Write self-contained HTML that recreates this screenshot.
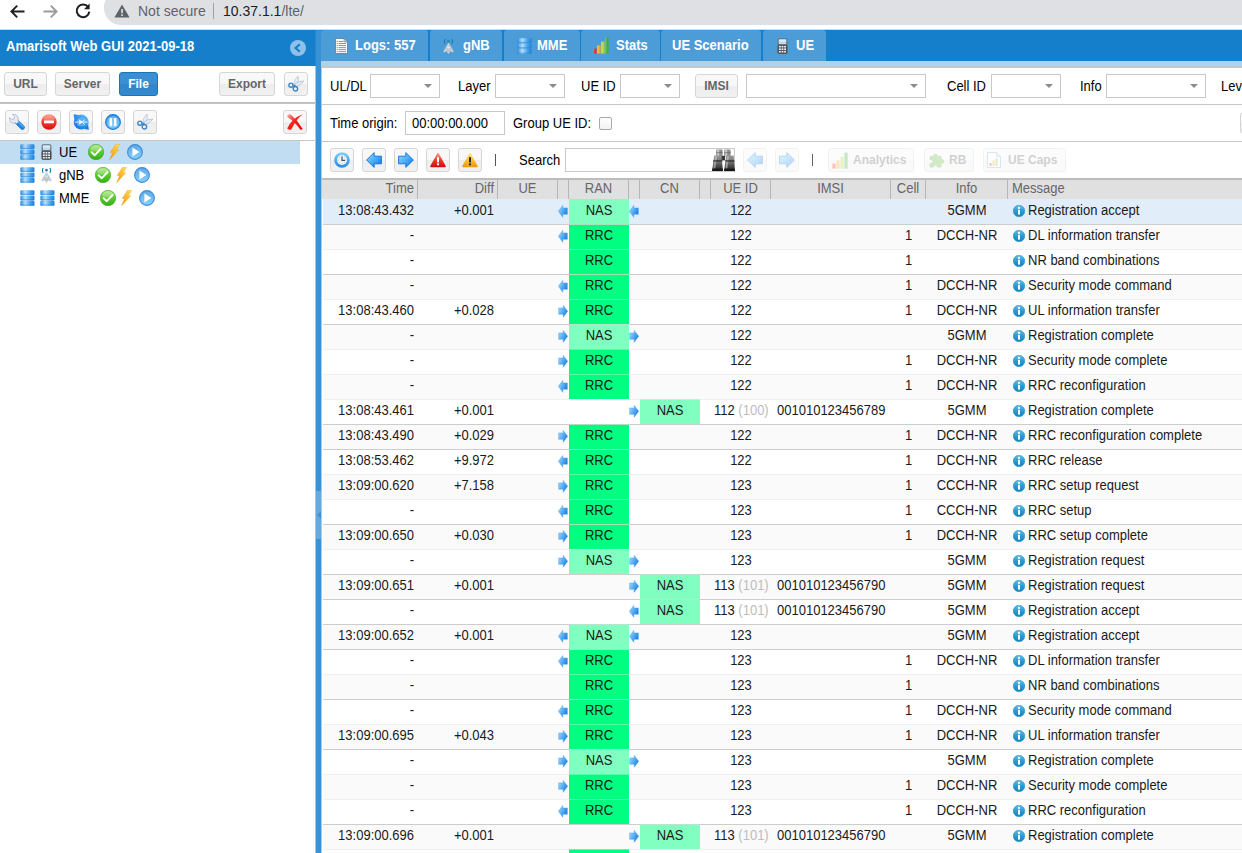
<!DOCTYPE html>
<html><head><meta charset="utf-8"><title>Amarisoft Web GUI</title><style>
*{box-sizing:border-box;margin:0;padding:0}
html,body{width:1242px;height:853px;overflow:hidden;background:#fff}
body{font-family:"Liberation Sans",sans-serif;font-size:13px;color:#000;position:relative}
.a{position:absolute}
.t{position:absolute;white-space:nowrap;line-height:16px;transform:scaleY(1.1);transform-origin:0 78%}
.nt{transform:none}
.x{display:inline-block;line-height:16px;transform:scaleY(1.1);transform-origin:50% 78%}
svg{display:block}
.ic{position:absolute}
/* browser chrome */
#pill{left:104px;top:-10px;width:1200px;height:35px;border-radius:17px;background:#dfe0e3}
/* panels */
#lh{left:0;top:30px;width:316px;height:36px;background:#157fcc}
#split{left:315px;top:30px;width:7px;height:823px;background:linear-gradient(to right,rgba(56,146,212,.5) 1px,#3892d4 1px,#3892d4 6px,rgba(56,146,212,.45) 6px)}
#tabbar{left:321px;top:30px;width:921px;height:31px;background:#157fcc}
#strip{left:321px;top:61px;width:921px;height:5px;background:#add2ed}
.tab{position:absolute;top:0;height:31px;background:#4b9cd7;border-radius:3px 3px 0 0;color:#fff;font-weight:bold;font-size:13px}
.tab .t{top:8px}
.hl{position:absolute;background:#c6c6c6}
/* buttons */
.btn{position:absolute;height:24px;border:1px solid #d6d6d6;border-radius:3px;background:linear-gradient(#f8f8f8,#f8f8f8 50%,#ededed 50%,#f1f1f1);color:#666;font-weight:bold;font-size:12px;text-align:center;line-height:22px}
.btn.p{background:linear-gradient(#3a8fd3,#3a8fd3 50%,#3085cb 50%,#3589ce);border-color:#1a73bd;color:#fff}
.btn .ic{left:3px;top:3px}
.btn.dis{opacity:.3}
.fld{position:absolute;height:24px;border:1px solid #c8c8c8;background:#fff}
.fld i{position:absolute;right:7px;top:9px;width:0;height:0;border:4px solid transparent;border-top:4px solid #8c8c8c;border-bottom:0}
/* tree */
.trow{position:absolute;left:0;width:300px;height:23px}
/* grid */
#ghead{left:322px;top:180px;width:920px;height:19px;background:#e0e0e0}
.hc{position:absolute;top:0;height:19px;color:#666;line-height:17px;border-right:1px solid #b6b6b6}
.row{position:absolute;left:323px;width:919px;height:25px;background:#fff}
.row.alt{background:#fafafa}
.row.sel{background:#e1edf8}
.row .c{position:absolute;top:0;height:25px;line-height:24px;white-space:nowrap;color:#1a1a1a}
.row .ln{position:absolute;left:0;top:0;width:920px;height:1px}
.ran{background:#00ff80;text-align:center}
.nas{background:#80ffc0;text-align:center}
.g{color:#bdbdbd}
</style></head><body>
<svg width="0" height="0" style="position:absolute"><defs>
<linearGradient id="gBlue" x1="0" y1="0" x2="1" y2="1"><stop offset="0" stop-color="#8ed3fc"/><stop offset=".55" stop-color="#3ea3f2"/><stop offset="1" stop-color="#1173e0"/></linearGradient>
<linearGradient id="gBlueV" x1="0" y1="0" x2="0" y2="1"><stop offset="0" stop-color="#7ccbfb"/><stop offset="1" stop-color="#1c7fe3"/></linearGradient>
<linearGradient id="gBlueH" x1="0" y1="0" x2="1" y2="0"><stop offset="0" stop-color="#2b8de2"/><stop offset=".35" stop-color="#b4e0fb"/><stop offset=".7" stop-color="#4aa6ec"/><stop offset="1" stop-color="#1f7fd8"/></linearGradient>
<linearGradient id="gGreen" x1="0" y1="0" x2="0" y2="1"><stop offset="0" stop-color="#b2e98a"/><stop offset=".5" stop-color="#58cc2a"/><stop offset="1" stop-color="#34b012"/></linearGradient>
<linearGradient id="gRed" x1="0" y1="0" x2="0" y2="1"><stop offset="0" stop-color="#fa9a88"/><stop offset=".5" stop-color="#f03a2e"/><stop offset="1" stop-color="#d80e0e"/></linearGradient>
<linearGradient id="gRedX" x1="0" y1="0" x2="1" y2="1"><stop offset="0" stop-color="#fbb0a8"/><stop offset=".45" stop-color="#f6231d"/><stop offset="1" stop-color="#e00808"/></linearGradient>
<linearGradient id="gYel" x1="0" y1="0" x2="0" y2="1"><stop offset="0" stop-color="#ffe680"/><stop offset=".55" stop-color="#fbc02a"/><stop offset="1" stop-color="#ee9a10"/></linearGradient>
<linearGradient id="gBolt" x1="1" y1="0" x2="0" y2="1"><stop offset="0" stop-color="#ffe45c"/><stop offset=".5" stop-color="#fdb92a"/><stop offset="1" stop-color="#f08a12"/></linearGradient>
<linearGradient id="gGray" x1="0" y1="0" x2="0" y2="1"><stop offset="0" stop-color="#9a9a9a"/><stop offset=".45" stop-color="#6a6a6a"/><stop offset="1" stop-color="#1e1e1e"/></linearGradient>
<linearGradient id="gCirc" x1="0" y1="0" x2="0" y2="1"><stop offset="0" stop-color="#62a8e6"/><stop offset=".5" stop-color="#6fbcf0"/><stop offset="1" stop-color="#86d4fb"/></linearGradient>
<linearGradient id="gPause" x1="0" y1="0" x2="0" y2="1"><stop offset="0" stop-color="#3a93e4"/><stop offset="1" stop-color="#6cc6f8"/></linearGradient>
<linearGradient id="gHandle" x1="0" y1="0" x2="1" y2="1"><stop offset="0" stop-color="#1c6fd0"/><stop offset="1" stop-color="#4fb8f2"/></linearGradient>
<linearGradient id="gArr" x1="0" y1="0" x2="1" y2=".6"><stop offset="0" stop-color="#b4defb"/><stop offset=".5" stop-color="#5cb2f4"/><stop offset="1" stop-color="#1c7fe6"/></linearGradient>
<linearGradient id="gArrB" x1="0" y1="0" x2="1" y2="1"><stop offset="0" stop-color="#9adcfe"/><stop offset=".45" stop-color="#4fb4f8"/><stop offset="1" stop-color="#0f6fe0"/></linearGradient>
<linearGradient id="gClk" x1="0" y1="0" x2="0" y2="1"><stop offset="0" stop-color="#8ad4fc"/><stop offset=".5" stop-color="#4aaaf2"/><stop offset="1" stop-color="#2a8ae4"/></linearGradient>
<linearGradient id="gRef" x1="0" y1="1" x2="1" y2="0"><stop offset="0" stop-color="#0f70dc"/><stop offset=".5" stop-color="#2f94ec"/><stop offset="1" stop-color="#6ec8fb"/></linearGradient>
<linearGradient id="gInfo" x1="0" y1="0" x2="0" y2="1"><stop offset="0" stop-color="#62bde6"/><stop offset=".5" stop-color="#2a9ad2"/><stop offset="1" stop-color="#1484c0"/></linearGradient>
</defs></svg>
<div class="a" id="pill"></div>
<svg class="ic" style="left:9px;top:3px" width="17" height="17" viewBox="0 0 17 17"><path d="M15.5 8.5H3M8.2 2.6L2.4 8.5l5.8 5.9" fill="none" stroke="#1f1f1f" stroke-width="1.9"/></svg>
<svg class="ic" style="left:42px;top:3px" width="17" height="17" viewBox="0 0 17 17"><path d="M1.5 8.5H14M8.8 2.6l5.8 5.9-5.8 5.9" fill="none" stroke="#9a9a9a" stroke-width="1.9"/></svg>
<svg class="ic" style="left:74px;top:2px" width="18" height="18" viewBox="0 0 18 18"><path d="M14.2 5.2A6.3 6.3 0 1 0 15.3 9.6" fill="none" stroke="#1f1f1f" stroke-width="2"/><path d="M15.6 1.6v5.6H10z" fill="#1f1f1f"/></svg>
<svg class="ic" style="left:114px;top:4px" width="16" height="14" viewBox="0 0 16 14"><path d="M8 0.5L15.6 13.5H0.4z" fill="#5f6368"/><rect x="7.2" y="5" width="1.7" height="4.2" fill="#dfe0e3"/><rect x="7.2" y="10.3" width="1.7" height="1.7" fill="#dfe0e3"/></svg>
<div class="t nt" style="left:138px;top:3px;font-size:14px;color:#5f6368">Not secure</div>
<div class="a" style="left:213px;top:3px;width:1px;height:16px;background:#9aa0a6"></div>
<div class="t nt" style="left:223px;top:3px;font-size:14px;color:#202124">10.37.1.1<span style="color:#5f6368">/lte/</span></div>
<div class="a" style="left:0;top:29px;width:1242px;height:1px;background:#d6d6d6"></div>
<div class="a" id="lh"></div>
<div class="t" style="left:6px;top:39px;color:#fff;font-weight:bold;font-size:13px">Amarisoft Web GUI 2021-09-18</div>
<svg class="ic" style="left:290px;top:40px" width="16" height="16" viewBox="0 0 16 16"><circle cx="8" cy="8" r="8" fill="#8fc1e8"/><path d="M9.8 4.2L5.6 8l4.2 3.8" fill="none" stroke="#157fcc" stroke-width="2.2"/></svg>
<div class="a" id="split"></div>
<div class="a" style="left:316px;top:491px;width:5px;height:48px;background:#67a9dd"></div>
<svg class="ic" style="left:317px;top:511px" width="4" height="8" viewBox="0 0 4 8"><path d="M4 0L0 4l4 4z" fill="#3f93d6"/></svg>
<div class="btn " style="left:4px;top:72px;width:43px"><span class="x">URL</span></div>
<div class="btn " style="left:55px;top:72px;width:55px"><span class="x">Server</span></div>
<div class="btn p" style="left:119px;top:72px;width:39px"><span class="x">File</span></div>
<div class="btn " style="left:219px;top:72px;width:56px"><span class="x">Export</span></div>
<div class="btn " style="left:284px;top:72px;width:24px"><span class="ic"><svg width="16" height="16" viewBox="0 0 16 16" ><path d="M5.4 8.6 Q6.8 3 10 0.1 Q11.8 4 7.8 9.8 Z" fill="#e9eff6" stroke="#a3b3c4" stroke-width=".6"/><path d="M6.6 8.2 Q11 4.4 15.9 5.1 Q13 9.6 7.6 10.8 Z" fill="#e2eaf2" stroke="#a3b3c4" stroke-width=".6"/><circle cx="2.9" cy="9.2" r="2.05" fill="none" stroke="#3f84c9" stroke-width="1.35"/><circle cx="7.4" cy="12.7" r="2.25" fill="none" stroke="#3f84c9" stroke-width="1.35"/><path d="M4.8 10 L6.8 9.4 L7.2 10.6" fill="none" stroke="#3f84c9" stroke-width="1.3"/></svg></span></div>
<div class="hl" style="left:0;top:102px;width:316px;height:2px;background:linear-gradient(#bababa,#c9c9c9)"></div>
<div class="btn " style="left:5px;top:110px;width:24px"><span class="ic"><svg width="16" height="16" viewBox="0 0 16 16" ><path d="M8.4 8.4 L13.4 13.4" stroke="#1f7ddc" stroke-width="4.8" stroke-linecap="round"/><path d="M9.4 8.2 L14 12.8" stroke="#58b8f4" stroke-width="1.6" stroke-linecap="round" opacity=".8"/><path d="M3.6 0.6 A4.4 4.4 0 0 1 9 6.4 L9.8 7.4 L7.6 9.6 L6.4 8.8 A4.4 4.4 0 0 1 0.4 3.6 L3 5.6 L5 5 L5.6 3 Z" fill="#e6e9f2" stroke="#a9aecb" stroke-width=".7"/></svg></span></div>
<div class="btn " style="left:37px;top:110px;width:24px"><span class="ic"><svg width="16" height="16" viewBox="0 0 16 16" ><circle cx="8" cy="8" r="7.7" fill="url(#gRed)"/><ellipse cx="8" cy="4.4" rx="5.4" ry="3" fill="#fff" opacity=".2"/><rect x="3" y="6.5" width="10" height="2.8" fill="#fff"/></svg></span></div>
<div class="btn " style="left:69px;top:110px;width:24px"><span class="ic"><svg width="16" height="16" viewBox="0 0 16 16" ><circle cx="8.2" cy="8" r="7.5" fill="url(#gRef)"/><path d="M0.6 0.2 L1.3 5.2 L5.4 1.1 Z" fill="#2b8fea"/><path d="M15.9 15.8 L15.1 10.8 L11 14.9 Z" fill="#1a7ce2"/><circle cx="8.2" cy="8" r="4.6" fill="#7cc8fa" opacity=".5"/><path d="M1.6 7.7 L6.6 7.5 L5.2 5.2 L9.6 7.5 L14.8 7.7 L14.8 8.5 L9.6 8.6 L5.2 11 L6.6 8.6 L1.6 8.5 Z" fill="#fff" opacity=".92"/><path d="M11.6 5.6 L9.8 7.4 M11.6 10.6 L9.8 8.8" stroke="#fff" stroke-width="1" opacity=".85"/></svg></span></div>
<div class="btn " style="left:101px;top:110px;width:24px"><span class="ic"><svg width="16" height="16" viewBox="0 0 16 16" ><circle cx="8" cy="8" r="7.4" fill="url(#gPause)" stroke="#1f7bd8" stroke-width="1.1"/><circle cx="8" cy="8" r="5.8" fill="#8fd4fb" opacity=".45"/><rect x="4.5" y="4" width="2.7" height="8.2" fill="#fff" opacity=".95"/><rect x="8.8" y="4" width="2.7" height="8.2" fill="#fff" opacity=".95"/></svg></span></div>
<div class="btn " style="left:133px;top:110px;width:24px"><span class="ic"><svg width="16" height="16" viewBox="0 0 16 16" ><path d="M5.4 8.6 Q6.8 3 10 0.1 Q11.8 4 7.8 9.8 Z" fill="#e9eff6" stroke="#a3b3c4" stroke-width=".6"/><path d="M6.6 8.2 Q11 4.4 15.9 5.1 Q13 9.6 7.6 10.8 Z" fill="#e2eaf2" stroke="#a3b3c4" stroke-width=".6"/><circle cx="2.9" cy="9.2" r="2.05" fill="none" stroke="#3f84c9" stroke-width="1.35"/><circle cx="7.4" cy="12.7" r="2.25" fill="none" stroke="#3f84c9" stroke-width="1.35"/><path d="M4.8 10 L6.8 9.4 L7.2 10.6" fill="none" stroke="#3f84c9" stroke-width="1.3"/></svg></span></div>
<div class="btn " style="left:283px;top:110px;width:24px"><span class="ic"><svg width="16" height="16" viewBox="0 0 16 16" ><path d="M16 0.3 Q9.6 4.6 4.4 15.2 Q2.4 16.6 0.2 14.6 Q4.6 4.2 16 0.3Z" fill="url(#gRedX)"/><path d="M0.1 2.8 Q0.3 0 3.6 0.3 Q10.2 6 15.5 14.8 Q15.2 16.3 13.2 15.6 Q8 8 0.1 2.8Z" fill="url(#gRedX)"/></svg></span></div>
<div class="hl" style="left:0;top:140px;width:316px;height:1px"></div>
<div class="trow" style="top:141px;background:#c1ddf1"><span class="ic" style="left:20px;top:3px"><svg width="15" height="16" viewBox="0 0 15 16" ><rect x="0.3" y="0.2" width="14.2" height="4.9" rx="1.3" fill="url(#gBlueH)"/><rect x="0.3" y="3.8000000000000003" width="14.2" height="1.3" rx=".6" fill="#1f7fd8" opacity=".45"/><rect x="0.3" y="5.5" width="14.2" height="4.9" rx="1.3" fill="url(#gBlueH)"/><rect x="0.3" y="9.1" width="14.2" height="1.3" rx=".6" fill="#1f7fd8" opacity=".45"/><rect x="0.3" y="10.8" width="14.2" height="4.9" rx="1.3" fill="url(#gBlueH)"/><rect x="0.3" y="14.4" width="14.2" height="1.3" rx=".6" fill="#1f7fd8" opacity=".45"/></svg></span><span class="ic" style="left:41px;top:3px"><svg width="11" height="16" viewBox="0 0 11 16" ><rect x="0.6" y="0.3" width="9.8" height="15.4" rx="1.6" fill="#6b7077"/><rect x="0.6" y="7" width="9.8" height="8.7" rx="1.4" fill="#4a4e54"/><rect x="1.8" y="1.4" width="7.4" height="4.6" rx=".5" fill="#b9dcf5"/><rect x="1.8" y="1.4" width="7.4" height="2" rx=".5" fill="#d9eefb"/><rect x="1.9" y="7.9" width="1.9" height="1.6" fill="#eceff1"/><rect x="4.5" y="7.9" width="1.9" height="1.6" fill="#eceff1"/><rect x="7.1" y="7.9" width="1.9" height="1.6" fill="#eceff1"/><rect x="1.9" y="10.4" width="1.9" height="1.6" fill="#eceff1"/><rect x="4.5" y="10.4" width="1.9" height="1.6" fill="#eceff1"/><rect x="7.1" y="10.4" width="1.9" height="1.6" fill="#eceff1"/><rect x="1.9" y="12.9" width="1.9" height="1.6" fill="#eceff1"/><rect x="4.5" y="12.9" width="1.9" height="1.6" fill="#eceff1"/><rect x="7.1" y="12.9" width="1.9" height="1.6" fill="#eceff1"/></svg></span><div class="t" style="left:59px;top:4px">UE</div><span class="ic" style="left:88px;top:3px"><svg width="16" height="16" viewBox="0 0 16 16" ><circle cx="8" cy="8" r="7.7" fill="url(#gGreen)" stroke="#3c9a28" stroke-width=".6"/><ellipse cx="8" cy="4.6" rx="5.6" ry="3.2" fill="#fff" opacity=".22"/><path d="M3.6 8.2 L6.8 11.2 L12.6 5" fill="none" stroke="#fff" stroke-width="1.9" stroke-linecap="round" stroke-linejoin="round"/></svg></span><span class="ic" style="left:109px;top:3px"><svg width="11" height="16" viewBox="0 0 11 16" ><path d="M6.6 0.2 L10.6 0.2 L7.2 5.8 L9.8 5.8 L0.6 15.8 L3.6 8.4 L1.2 8.4 Z" fill="url(#gBolt)" stroke="#f0a020" stroke-width=".4"/></svg></span><span class="ic" style="left:127px;top:3px"><svg width="16" height="16" viewBox="0 0 16 16" ><circle cx="8" cy="8" r="7.4" fill="url(#gCirc)" stroke="#3f8ada" stroke-width="1.1"/><path d="M5.4 3.6 L12.4 8 L5.4 12.4 Z" fill="#fff"/></svg></span></div>
<div class="trow" style="top:164px;"><span class="ic" style="left:20px;top:3px"><svg width="15" height="16" viewBox="0 0 15 16" ><rect x="0.3" y="0.2" width="14.2" height="4.9" rx="1.3" fill="url(#gBlueH)"/><rect x="0.3" y="3.8000000000000003" width="14.2" height="1.3" rx=".6" fill="#1f7fd8" opacity=".45"/><rect x="0.3" y="5.5" width="14.2" height="4.9" rx="1.3" fill="url(#gBlueH)"/><rect x="0.3" y="9.1" width="14.2" height="1.3" rx=".6" fill="#1f7fd8" opacity=".45"/><rect x="0.3" y="10.8" width="14.2" height="4.9" rx="1.3" fill="url(#gBlueH)"/><rect x="0.3" y="14.4" width="14.2" height="1.3" rx=".6" fill="#1f7fd8" opacity=".45"/></svg></span><span class="ic" style="left:41px;top:4px"><svg width="11" height="15" viewBox="0 0 11 15" style="opacity:1"><path d="M5.5 3.4 L0.2 12.6 L1.5 13.5 L3.4 12.2 L5.5 14.9 L7.6 12.2 L9.5 13.5 L10.8 12.6 Z" fill="#c9cdd1"/><path d="M5.5 5.6 L3.6 10.6 L5.5 9 L7.4 10.6 Z" fill="#e4e7ea"/><circle cx="3.9" cy="9.6" r=".55" fill="#7fb0dd"/><circle cx="7.1" cy="9.6" r=".55" fill="#7fb0dd"/><circle cx="5.5" cy="7" r=".5" fill="#8fbbe2"/><path d="M3.6 11.6h3.8" stroke="#a9b4be" stroke-width=".6"/><circle cx="5.5" cy="2.2" r="1.35" fill="#1b8eb4"/><path d="M2 0.3 Q0.9 2.3 2 4.4M9 0.3 Q10.1 2.3 9 4.4" fill="none" stroke="#1b7ea4" stroke-width="1.15" stroke-linecap="round"/></svg></span><div class="t" style="left:59px;top:4px">gNB</div><span class="ic" style="left:95px;top:3px"><svg width="16" height="16" viewBox="0 0 16 16" ><circle cx="8" cy="8" r="7.7" fill="url(#gGreen)" stroke="#3c9a28" stroke-width=".6"/><ellipse cx="8" cy="4.6" rx="5.6" ry="3.2" fill="#fff" opacity=".22"/><path d="M3.6 8.2 L6.8 11.2 L12.6 5" fill="none" stroke="#fff" stroke-width="1.9" stroke-linecap="round" stroke-linejoin="round"/></svg></span><span class="ic" style="left:116px;top:3px"><svg width="11" height="16" viewBox="0 0 11 16" ><path d="M6.6 0.2 L10.6 0.2 L7.2 5.8 L9.8 5.8 L0.6 15.8 L3.6 8.4 L1.2 8.4 Z" fill="url(#gBolt)" stroke="#f0a020" stroke-width=".4"/></svg></span><span class="ic" style="left:134px;top:3px"><svg width="16" height="16" viewBox="0 0 16 16" ><circle cx="8" cy="8" r="7.4" fill="url(#gCirc)" stroke="#3f8ada" stroke-width="1.1"/><path d="M5.4 3.6 L12.4 8 L5.4 12.4 Z" fill="#fff"/></svg></span></div>
<div class="trow" style="top:187px;"><span class="ic" style="left:20px;top:3px"><svg width="15" height="16" viewBox="0 0 15 16" ><rect x="0.3" y="0.2" width="14.2" height="4.9" rx="1.3" fill="url(#gBlueH)"/><rect x="0.3" y="3.8000000000000003" width="14.2" height="1.3" rx=".6" fill="#1f7fd8" opacity=".45"/><rect x="0.3" y="5.5" width="14.2" height="4.9" rx="1.3" fill="url(#gBlueH)"/><rect x="0.3" y="9.1" width="14.2" height="1.3" rx=".6" fill="#1f7fd8" opacity=".45"/><rect x="0.3" y="10.8" width="14.2" height="4.9" rx="1.3" fill="url(#gBlueH)"/><rect x="0.3" y="14.4" width="14.2" height="1.3" rx=".6" fill="#1f7fd8" opacity=".45"/></svg></span><span class="ic" style="left:40px;top:3px"><svg width="15" height="16" viewBox="0 0 15 16" ><rect x="0.3" y="0.2" width="14.2" height="4.9" rx="1.3" fill="url(#gBlueH)"/><rect x="0.3" y="3.8000000000000003" width="14.2" height="1.3" rx=".6" fill="#1f7fd8" opacity=".45"/><rect x="0.3" y="5.5" width="14.2" height="4.9" rx="1.3" fill="url(#gBlueH)"/><rect x="0.3" y="9.1" width="14.2" height="1.3" rx=".6" fill="#1f7fd8" opacity=".45"/><rect x="0.3" y="10.8" width="14.2" height="4.9" rx="1.3" fill="url(#gBlueH)"/><rect x="0.3" y="14.4" width="14.2" height="1.3" rx=".6" fill="#1f7fd8" opacity=".45"/></svg></span><div class="t" style="left:59px;top:4px">MME</div><span class="ic" style="left:100px;top:3px"><svg width="16" height="16" viewBox="0 0 16 16" ><circle cx="8" cy="8" r="7.7" fill="url(#gGreen)" stroke="#3c9a28" stroke-width=".6"/><ellipse cx="8" cy="4.6" rx="5.6" ry="3.2" fill="#fff" opacity=".22"/><path d="M3.6 8.2 L6.8 11.2 L12.6 5" fill="none" stroke="#fff" stroke-width="1.9" stroke-linecap="round" stroke-linejoin="round"/></svg></span><span class="ic" style="left:121px;top:3px"><svg width="11" height="16" viewBox="0 0 11 16" ><path d="M6.6 0.2 L10.6 0.2 L7.2 5.8 L9.8 5.8 L0.6 15.8 L3.6 8.4 L1.2 8.4 Z" fill="url(#gBolt)" stroke="#f0a020" stroke-width=".4"/></svg></span><span class="ic" style="left:139px;top:3px"><svg width="16" height="16" viewBox="0 0 16 16" ><circle cx="8" cy="8" r="7.4" fill="url(#gCirc)" stroke="#3f8ada" stroke-width="1.1"/><path d="M5.4 3.6 L12.4 8 L5.4 12.4 Z" fill="#fff"/></svg></span></div>
<div class="a" id="tabbar">
<div class="tab" style="left:0px;width:107px"><span class="ic" style="left:14px;top:8px"><svg width="13" height="16" viewBox="0 0 13 16" ><path d="M0.5 0.5 H9 L12.5 4 V15.5 H0.5 Z" fill="#fcfcfc" stroke="#5e7796" stroke-width=".8"/><path d="M9 0.5 V4 H12.5 Z" fill="#cfd9e4" stroke="#5e7796" stroke-width=".6"/><rect x="1.5" y="2.9" width="1.6" height="1" fill="#f39a2b"/><rect x="3.6" y="3.0" width="4.6" height=".9" fill="#7288c6"/><rect x="1.5" y="4.9" width="1.6" height="1" fill="#f39a2b"/><rect x="3.6" y="5.0" width="7.4" height=".9" fill="#7288c6"/><rect x="1.5" y="6.9" width="1.6" height="1" fill="#f39a2b"/><rect x="3.6" y="7.0" width="7.4" height=".9" fill="#7288c6"/><rect x="1.5" y="9.1" width="1.6" height="1" fill="#f39a2b"/><rect x="3.6" y="9.2" width="7.4" height=".9" fill="#7288c6"/><rect x="1.5" y="11.1" width="1.6" height="1" fill="#f39a2b"/><rect x="3.6" y="11.2" width="7.4" height=".9" fill="#7288c6"/><rect x="1.5" y="13.1" width="1.6" height="1" fill="#f39a2b"/><rect x="3.6" y="13.2" width="7.4" height=".9" fill="#7288c6"/></svg></span><div class="t" style="left:34px">Logs: 557</div></div>
<div class="tab" style="left:109px;width:72px"><span class="ic" style="left:13px;top:9px"><svg width="11" height="15" viewBox="0 0 11 15" style="opacity:1"><path d="M5.5 3.4 L0.2 12.6 L1.5 13.5 L3.4 12.2 L5.5 14.9 L7.6 12.2 L9.5 13.5 L10.8 12.6 Z" fill="#c9cdd1"/><path d="M5.5 5.6 L3.6 10.6 L5.5 9 L7.4 10.6 Z" fill="#e4e7ea"/><circle cx="3.9" cy="9.6" r=".55" fill="#7fb0dd"/><circle cx="7.1" cy="9.6" r=".55" fill="#7fb0dd"/><circle cx="5.5" cy="7" r=".5" fill="#8fbbe2"/><path d="M3.6 11.6h3.8" stroke="#a9b4be" stroke-width=".6"/><circle cx="5.5" cy="2.2" r="1.35" fill="#1b8eb4"/><path d="M2 0.3 Q0.9 2.3 2 4.4M9 0.3 Q10.1 2.3 9 4.4" fill="none" stroke="#1b7ea4" stroke-width="1.15" stroke-linecap="round"/></svg></span><div class="t" style="left:33px">gNB</div></div>
<div class="tab" style="left:183px;width:76px"><span class="ic" style="left:13px;top:8px"><svg width="15" height="16" viewBox="0 0 15 16" ><rect x="0.3" y="0.2" width="14.2" height="4.9" rx="1.3" fill="url(#gBlueH)"/><rect x="0.3" y="3.8000000000000003" width="14.2" height="1.3" rx=".6" fill="#1f7fd8" opacity=".45"/><rect x="0.3" y="5.5" width="14.2" height="4.9" rx="1.3" fill="url(#gBlueH)"/><rect x="0.3" y="9.1" width="14.2" height="1.3" rx=".6" fill="#1f7fd8" opacity=".45"/><rect x="0.3" y="10.8" width="14.2" height="4.9" rx="1.3" fill="url(#gBlueH)"/><rect x="0.3" y="14.4" width="14.2" height="1.3" rx=".6" fill="#1f7fd8" opacity=".45"/></svg></span><div class="t" style="left:33px">MME</div></div>
<div class="tab" style="left:260px;width:79px"><span class="ic" style="left:12px;top:7px"><svg width="16" height="17" viewBox="0 0 16 17" style="opacity:1"><rect x="0.2" y="11.6" width="3.4" height="5" fill="#ee2a1e"/><rect x="4.2" y="8.4" width="3.4" height="8.2" fill="#f8a51e"/><rect x="8.2" y="4.6" width="3.4" height="12" fill="#b4d334"/><rect x="12.2" y="0.6" width="3.4" height="16" fill="#3fae3a"/><rect x="0.2" y="11.6" width="1.2" height="5" fill="#fff" opacity=".3"/><rect x="4.2" y="8.4" width="1.2" height="8.2" fill="#fff" opacity=".3"/><rect x="8.2" y="4.6" width="1.2" height="12" fill="#fff" opacity=".3"/><rect x="12.2" y="0.6" width="1.2" height="16" fill="#fff" opacity=".3"/></svg></span><div class="t" style="left:35px">Stats</div></div>
<div class="tab" style="left:340px;width:100px"><div class="t" style="left:11px">UE Scenario</div></div>
<div class="tab" style="left:442px;width:63px"><span class="ic" style="left:14px;top:8px"><svg width="11" height="16" viewBox="0 0 11 16" ><rect x="0.6" y="0.3" width="9.8" height="15.4" rx="1.6" fill="#6b7077"/><rect x="0.6" y="7" width="9.8" height="8.7" rx="1.4" fill="#4a4e54"/><rect x="1.8" y="1.4" width="7.4" height="4.6" rx=".5" fill="#b9dcf5"/><rect x="1.8" y="1.4" width="7.4" height="2" rx=".5" fill="#d9eefb"/><rect x="1.9" y="7.9" width="1.9" height="1.6" fill="#eceff1"/><rect x="4.5" y="7.9" width="1.9" height="1.6" fill="#eceff1"/><rect x="7.1" y="7.9" width="1.9" height="1.6" fill="#eceff1"/><rect x="1.9" y="10.4" width="1.9" height="1.6" fill="#eceff1"/><rect x="4.5" y="10.4" width="1.9" height="1.6" fill="#eceff1"/><rect x="7.1" y="10.4" width="1.9" height="1.6" fill="#eceff1"/><rect x="1.9" y="12.9" width="1.9" height="1.6" fill="#eceff1"/><rect x="4.5" y="12.9" width="1.9" height="1.6" fill="#eceff1"/><rect x="7.1" y="12.9" width="1.9" height="1.6" fill="#eceff1"/></svg></span><div class="t" style="left:33px">UE</div></div>
</div>
<div class="a" id="strip"></div>
<div class="hl" style="left:321px;top:66px;width:921px;height:2px"></div>
<div class="t" style="left:330px;top:79px">UL/DL</div><div class="fld" style="left:370px;top:74px;width:70px"><i></i></div>
<div class="t" style="left:458px;top:79px">Layer</div><div class="fld" style="left:495px;top:74px;width:70px"><i></i></div>
<div class="t" style="left:581px;top:79px">UE ID</div><div class="fld" style="left:620px;top:74px;width:60px"><i></i></div>
<div class="btn" style="left:695px;top:74px;width:43px;font-size:12px"><span class="x">IMSI</span></div>
<div class="fld" style="left:746px;top:74px;width:180px"><i></i></div>
<div class="t" style="left:947px;top:79px">Cell ID</div><div class="fld" style="left:991px;top:74px;width:70px"><i></i></div>
<div class="t" style="left:1080px;top:79px">Info</div><div class="fld" style="left:1106px;top:74px;width:100px"><i></i></div>
<div class="t" style="left:1221px;top:79px">Level</div>
<div class="hl" style="left:322px;top:104px;width:920px;height:1px"></div>
<div class="t" style="left:330px;top:116px">Time origin:</div>
<div class="fld" style="left:405px;top:111px;width:100px"><div class="t" style="left:6px;top:4px">00:00:00.000</div></div>
<div class="t" style="left:513px;top:116px">Group UE ID:</div>
<div class="a" style="left:599px;top:117px;width:13px;height:13px;border:1px solid #a9a9a9;border-radius:2px;background:linear-gradient(#fff,#f2f2f2)"></div>
<div class="btn" style="left:1240px;top:112px;width:24px;height:22px"></div>
<div class="hl" style="left:322px;top:141px;width:920px;height:1px"></div>
<div class="btn " style="left:330px;top:148px;width:24px"><span class="ic"><svg width="16" height="16" viewBox="0 0 16 16" ><circle cx="8" cy="8" r="7.8" fill="url(#gClk)"/><circle cx="8" cy="8" r="5" fill="#f4f5f7"/><path d="M8 3.8v.8M8 11.4v.8M3.8 8h.8M11.4 8h.8M5 5l.5.5M10.5 10.5l.5.5M11 5l-.5.5M5 11l.5-.5" stroke="#8d959d" stroke-width=".8"/><path d="M8 4.6V8.3H11" fill="none" stroke="#4a5057" stroke-width="1.2"/></svg></span></div>
<div class="btn " style="left:362px;top:148px;width:24px"><span class="ic"><svg width="16" height="16" viewBox="0 0 16 16" style="opacity:1"><path d="M0.6 8 L8.2 0.6 L8.2 4.2 L15.4 4.2 L15.4 11.8 L8.2 11.8 L8.2 15.4 Z" fill="url(#gArrB)" stroke="#0f6ddc" stroke-width=".9" stroke-linejoin="round"/></svg></span></div>
<div class="btn " style="left:394px;top:148px;width:24px"><span class="ic"><svg width="16" height="16" viewBox="0 0 16 16" style="opacity:1"><path d="M15.4 8 L7.8 0.6 L7.8 4.2 L0.6 4.2 L0.6 11.8 L7.8 11.8 L7.8 15.4 Z" fill="url(#gArrB)" stroke="#0f6ddc" stroke-width=".9" stroke-linejoin="round"/></svg></span></div>
<div class="btn " style="left:426px;top:148px;width:24px"><span class="ic"><svg width="16" height="16" viewBox="0 0 16 16" ><path d="M8 1.6 L15 14.4 L1 14.4 Z" fill="url(#gRed)" stroke="url(#gRed)" stroke-width="1.6" stroke-linejoin="round"/><rect x="7" y="5" width="2" height="5.4" rx=".4" fill="#fff"/><rect x="7" y="11.3" width="2" height="2" rx=".4" fill="#fff"/></svg></span></div>
<div class="btn " style="left:458px;top:148px;width:24px"><span class="ic"><svg width="16" height="16" viewBox="0 0 16 16" ><path d="M8 1.6 L15 14.4 L1 14.4 Z" fill="url(#gYel)" stroke="url(#gYel)" stroke-width="1.6" stroke-linejoin="round"/><rect x="7" y="5" width="2" height="5.4" rx=".4" fill="#2a2a2a"/><rect x="7" y="11.3" width="2" height="2" rx=".4" fill="#2a2a2a"/></svg></span></div>
<div class="a" style="left:495px;top:154px;width:1px;height:12px;background:#555"></div>
<div class="t" style="left:519px;top:153px">Search</div>
<div class="fld" style="left:565px;top:148px;width:170px"></div>
<span class="ic" style="left:712px;top:149px"><svg width="23" height="22" viewBox="0 0 23 22" ><rect x="4.2" y="0.4" width="6.4" height="7" rx="1" fill="#8e8e8e"/><rect x="5.2" y="0.4" width="2" height="6.6" fill="#d6d6d6" opacity=".85"/><rect x="4.2" y="3.2" width="6.4" height="1" fill="#555" opacity=".6"/><path d="M2.2 6.6 L9.6 6.6 L10.9 22 L0.1 22 Z" fill="url(#gGray)"/><path d="M3 7.4 L5 7.4 L3.4 19.4 L1.2 19.4 Z" fill="#dcdcdc" opacity=".5"/><rect x="1.2" y="11.2" width="9.2" height="1.5" fill="#262626" opacity=".75"/><rect x="0.2" y="19.6" width="10.7" height="2.4" fill="#141414" opacity=".8"/><rect x="12.2" y="0.4" width="6.4" height="7" rx="1" fill="#8e8e8e"/><rect x="13.2" y="0.4" width="2" height="6.6" fill="#d6d6d6" opacity=".85"/><rect x="12.2" y="3.2" width="6.4" height="1" fill="#555" opacity=".6"/><path d="M14.2 6.6 L21.6 6.6 L22.9 22 L12.1 22 Z" fill="url(#gGray)"/><path d="M15 7.4 L17 7.4 L15.4 19.4 L13.2 19.4 Z" fill="#dcdcdc" opacity=".5"/><rect x="13.2" y="11.2" width="9.2" height="1.5" fill="#262626" opacity=".75"/><rect x="12.2" y="19.6" width="10.7" height="2.4" fill="#141414" opacity=".8"/><rect x="9.6" y="6.8" width="3.4" height="4.6" fill="#3a3a3a"/></svg></span>
<div class="btn dis" style="left:743px;top:148px;width:24px"><span class="ic"><svg width="16" height="16" viewBox="0 0 16 16" style="opacity:1"><path d="M0.6 8 L8.2 0.6 L8.2 4.2 L15.4 4.2 L15.4 11.8 L8.2 11.8 L8.2 15.4 Z" fill="url(#gArrB)" stroke="#0f6ddc" stroke-width=".9" stroke-linejoin="round"/></svg></span></div>
<div class="btn dis" style="left:775px;top:148px;width:24px"><span class="ic"><svg width="16" height="16" viewBox="0 0 16 16" style="opacity:1"><path d="M15.4 8 L7.8 0.6 L7.8 4.2 L0.6 4.2 L0.6 11.8 L7.8 11.8 L7.8 15.4 Z" fill="url(#gArrB)" stroke="#0f6ddc" stroke-width=".9" stroke-linejoin="round"/></svg></span></div>
<div class="a" style="left:812px;top:154px;width:1px;height:12px;background:#666"></div>
<div class="btn dis" style="left:828px;top:148px;width:86px;text-align:left;padding-left:24px"><span class="ic"><svg width="16" height="17" viewBox="0 0 16 17" style="opacity:1"><rect x="0.2" y="11.6" width="3.4" height="5" fill="#ee2a1e"/><rect x="4.2" y="8.4" width="3.4" height="8.2" fill="#f8a51e"/><rect x="8.2" y="4.6" width="3.4" height="12" fill="#b4d334"/><rect x="12.2" y="0.6" width="3.4" height="16" fill="#3fae3a"/><rect x="0.2" y="11.6" width="1.2" height="5" fill="#fff" opacity=".3"/><rect x="4.2" y="8.4" width="1.2" height="8.2" fill="#fff" opacity=".3"/><rect x="8.2" y="4.6" width="1.2" height="12" fill="#fff" opacity=".3"/><rect x="12.2" y="0.6" width="1.2" height="16" fill="#fff" opacity=".3"/></svg></span><span class="x">Analytics</span></div>
<div class="btn dis" style="left:924px;top:148px;width:50px;text-align:left;padding-left:24px"><span class="ic"><svg width="16" height="16" viewBox="0 0 16 16" ><path d="M2 4.4 H5.4 A2.1 2.1 0 1 1 9.6 4.4 H13 V7.4 A2.1 2.1 0 1 1 13 11.4 V15 H9.6 A2.1 2.1 0 1 0 5.4 15 H2 V11.4 A2.1 2.1 0 1 0 2 7.4 Z" fill="#6cc04a" stroke="#4b9a2f" stroke-width=".7"/></svg></span><span class="x">RB</span></div>
<div class="btn dis" style="left:983px;top:148px;width:83px;text-align:left;padding-left:24px"><span class="ic"><svg width="14" height="16" viewBox="0 0 14 16" ><path d="M0.5 0.5 H9.5 L13.5 4.5 V15.5 H0.5 Z" fill="#fff" stroke="#6fa3d8" stroke-width=".9"/><path d="M9.5 0.5 V4.5 H13.5" fill="#d6e6f7" stroke="#6fa3d8" stroke-width=".7"/><rect x="2.5" y="11" width="2" height="3" fill="#e8322a"/><rect x="5.5" y="8.5" width="2" height="5.5" fill="#f5a623"/><rect x="8.5" y="6.5" width="2" height="7.5" fill="#7ac943"/></svg></span><span class="x">UE Caps</span></div>
<div class="hl" style="left:322px;top:178px;width:920px;height:2px;background:#bcbcbc"></div>
<div class="a" id="ghead">
<div class="hc" style="left:0px;width:96px;text-align:right;padding-right:3px;"><span class="x">Time</span></div>
<div class="hc" style="left:96px;width:80px;text-align:right;padding-right:3px;"><span class="x">Diff</span></div>
<div class="hc" style="left:176px;width:60px;text-align:center;"><span class="x">UE</span></div>
<div class="hc" style="left:236px;width:11px;"><span class="x"></span></div>
<div class="hc" style="left:247px;width:60px;text-align:center;"><span class="x">RAN</span></div>
<div class="hc" style="left:307px;width:11px;"><span class="x"></span></div>
<div class="hc" style="left:318px;width:60px;text-align:center;"><span class="x">CN</span></div>
<div class="hc" style="left:378px;width:11px;"><span class="x"></span></div>
<div class="hc" style="left:389px;width:60px;text-align:center;"><span class="x">UE ID</span></div>
<div class="hc" style="left:449px;width:120px;text-align:center;"><span class="x">IMSI</span></div>
<div class="hc" style="left:569px;width:35px;text-align:center;"><span class="x">Cell</span></div>
<div class="hc" style="left:604px;width:82px;text-align:center;"><span class="x">Info</span></div>
<div class="hc" style="left:686px;width:234px;text-align:left;padding-left:4px;border-right:0;"><span class="x">Message</span></div>
</div>
<div class="row sel" style="top:199px"><div class="c " style="left:0px;width:95px;text-align:right;padding-right:4px"><span class="x">13:08:43.432</span></div><div class="c " style="left:95px;width:80px;text-align:right;padding-right:4px"><span class="x">+0.001</span></div><span class="ic" style="left:235px;top:6px"><svg width="10" height="13" viewBox="0 0 9.6 12.5" ><path d="M0.3 6 L4.6 0.4 L4.6 2.8 L9 2.8 L9 9 L4.6 9 L4.6 11.8 Z" fill="url(#gArr)" stroke="#3c98ec" stroke-width=".4" stroke-linejoin="round"/></svg></span><div class="c nas" style="left:246px;width:60px;text-align:center;"><span class="x">NAS</span></div><span class="ic" style="left:306px;top:6px"><svg width="10" height="13" viewBox="0 0 9.6 12.5" ><path d="M0.3 6 L4.6 0.4 L4.6 2.8 L9 2.8 L9 9 L4.6 9 L4.6 11.8 Z" fill="url(#gArr)" stroke="#3c98ec" stroke-width=".4" stroke-linejoin="round"/></svg></span><div class="c " style="left:388px;width:60px;text-align:center;"><span class="x">122</span></div><div class="c " style="left:603px;width:82px;text-align:center;"><span class="x">5GMM</span></div><span class="ic" style="left:690px;top:6px"><svg width="12" height="12" viewBox="0 0 12 12" ><circle cx="6" cy="6" r="5.8" fill="url(#gInfo)" stroke="#1a8cc6" stroke-width=".5"/><rect x="5" y="4.8" width="2" height="4.8" fill="#fff"/><circle cx="6" cy="2.9" r="1.15" fill="#fff"/></svg></span><div class="c " style="left:705px;width:214px;text-align:left;"><span class="x">Registration accept</span></div></div>
<div class="row alt" style="top:224px"><div class="ln" style="background:#cdcdcd"></div><div class="c " style="left:0px;width:95px;text-align:right;padding-right:4px"><span class="x">-</span></div><span class="ic" style="left:235px;top:6px"><svg width="10" height="13" viewBox="0 0 9.6 12.5" ><path d="M0.3 6 L4.6 0.4 L4.6 2.8 L9 2.8 L9 9 L4.6 9 L4.6 11.8 Z" fill="url(#gArr)" stroke="#3c98ec" stroke-width=".4" stroke-linejoin="round"/></svg></span><div class="c ran" style="left:246px;width:60px;text-align:center;"><span class="x">RRC</span><div class="ln" style="width:100%;background:#a4e2c2"></div></div><div class="c " style="left:388px;width:60px;text-align:center;"><span class="x">122</span></div><div class="c " style="left:568px;width:35px;text-align:center;"><span class="x">1</span></div><div class="c " style="left:603px;width:82px;text-align:center;"><span class="x">DCCH-NR</span></div><span class="ic" style="left:690px;top:6px"><svg width="12" height="12" viewBox="0 0 12 12" ><circle cx="6" cy="6" r="5.8" fill="url(#gInfo)" stroke="#1a8cc6" stroke-width=".5"/><rect x="5" y="4.8" width="2" height="4.8" fill="#fff"/><circle cx="6" cy="2.9" r="1.15" fill="#fff"/></svg></span><div class="c " style="left:705px;width:214px;text-align:left;"><span class="x">DL information transfer</span></div></div>
<div class="row" style="top:249px"><div class="ln" style="background:#f0f0f0"></div><div class="c " style="left:0px;width:95px;text-align:right;padding-right:4px"><span class="x">-</span></div><div class="c ran" style="left:246px;width:60px;text-align:center;"><span class="x">RRC</span><div class="ln" style="width:100%;background:#52ffa8"></div></div><div class="c " style="left:388px;width:60px;text-align:center;"><span class="x">122</span></div><div class="c " style="left:568px;width:35px;text-align:center;"><span class="x">1</span></div><span class="ic" style="left:690px;top:6px"><svg width="12" height="12" viewBox="0 0 12 12" ><circle cx="6" cy="6" r="5.8" fill="url(#gInfo)" stroke="#1a8cc6" stroke-width=".5"/><rect x="5" y="4.8" width="2" height="4.8" fill="#fff"/><circle cx="6" cy="2.9" r="1.15" fill="#fff"/></svg></span><div class="c " style="left:705px;width:214px;text-align:left;"><span class="x">NR band combinations</span></div></div>
<div class="row alt" style="top:274px"><div class="ln" style="background:#cdcdcd"></div><div class="c " style="left:0px;width:95px;text-align:right;padding-right:4px"><span class="x">-</span></div><span class="ic" style="left:235px;top:6px"><svg width="10" height="13" viewBox="0 0 9.6 12.5" ><path d="M0.3 6 L4.6 0.4 L4.6 2.8 L9 2.8 L9 9 L4.6 9 L4.6 11.8 Z" fill="url(#gArr)" stroke="#3c98ec" stroke-width=".4" stroke-linejoin="round"/></svg></span><div class="c ran" style="left:246px;width:60px;text-align:center;"><span class="x">RRC</span><div class="ln" style="width:100%;background:#a4e2c2"></div></div><div class="c " style="left:388px;width:60px;text-align:center;"><span class="x">122</span></div><div class="c " style="left:568px;width:35px;text-align:center;"><span class="x">1</span></div><div class="c " style="left:603px;width:82px;text-align:center;"><span class="x">DCCH-NR</span></div><span class="ic" style="left:690px;top:6px"><svg width="12" height="12" viewBox="0 0 12 12" ><circle cx="6" cy="6" r="5.8" fill="url(#gInfo)" stroke="#1a8cc6" stroke-width=".5"/><rect x="5" y="4.8" width="2" height="4.8" fill="#fff"/><circle cx="6" cy="2.9" r="1.15" fill="#fff"/></svg></span><div class="c " style="left:705px;width:214px;text-align:left;"><span class="x">Security mode command</span></div></div>
<div class="row" style="top:299px"><div class="ln" style="background:#f0f0f0"></div><div class="c " style="left:0px;width:95px;text-align:right;padding-right:4px"><span class="x">13:08:43.460</span></div><div class="c " style="left:95px;width:80px;text-align:right;padding-right:4px"><span class="x">+0.028</span></div><span class="ic" style="left:235px;top:6px"><svg width="10" height="13" viewBox="0 0 9.6 12.5" ><path d="M9.3 6 L5 0.4 L5 2.8 L0.6 2.8 L0.6 9 L5 9 L5 11.8 Z" fill="url(#gArr)" stroke="#3c98ec" stroke-width=".4" stroke-linejoin="round"/></svg></span><div class="c ran" style="left:246px;width:60px;text-align:center;"><span class="x">RRC</span><div class="ln" style="width:100%;background:#52ffa8"></div></div><div class="c " style="left:388px;width:60px;text-align:center;"><span class="x">122</span></div><div class="c " style="left:568px;width:35px;text-align:center;"><span class="x">1</span></div><div class="c " style="left:603px;width:82px;text-align:center;"><span class="x">DCCH-NR</span></div><span class="ic" style="left:690px;top:6px"><svg width="12" height="12" viewBox="0 0 12 12" ><circle cx="6" cy="6" r="5.8" fill="url(#gInfo)" stroke="#1a8cc6" stroke-width=".5"/><rect x="5" y="4.8" width="2" height="4.8" fill="#fff"/><circle cx="6" cy="2.9" r="1.15" fill="#fff"/></svg></span><div class="c " style="left:705px;width:214px;text-align:left;"><span class="x">UL information transfer</span></div></div>
<div class="row alt" style="top:324px"><div class="ln" style="background:#cdcdcd"></div><div class="c " style="left:0px;width:95px;text-align:right;padding-right:4px"><span class="x">-</span></div><span class="ic" style="left:235px;top:6px"><svg width="10" height="13" viewBox="0 0 9.6 12.5" ><path d="M9.3 6 L5 0.4 L5 2.8 L0.6 2.8 L0.6 9 L5 9 L5 11.8 Z" fill="url(#gArr)" stroke="#3c98ec" stroke-width=".4" stroke-linejoin="round"/></svg></span><div class="c nas" style="left:246px;width:60px;text-align:center;"><span class="x">NAS</span><div class="ln" style="width:100%;background:#b6e6ce"></div></div><span class="ic" style="left:306px;top:6px"><svg width="10" height="13" viewBox="0 0 9.6 12.5" ><path d="M9.3 6 L5 0.4 L5 2.8 L0.6 2.8 L0.6 9 L5 9 L5 11.8 Z" fill="url(#gArr)" stroke="#3c98ec" stroke-width=".4" stroke-linejoin="round"/></svg></span><div class="c " style="left:388px;width:60px;text-align:center;"><span class="x">122</span></div><div class="c " style="left:603px;width:82px;text-align:center;"><span class="x">5GMM</span></div><span class="ic" style="left:690px;top:6px"><svg width="12" height="12" viewBox="0 0 12 12" ><circle cx="6" cy="6" r="5.8" fill="url(#gInfo)" stroke="#1a8cc6" stroke-width=".5"/><rect x="5" y="4.8" width="2" height="4.8" fill="#fff"/><circle cx="6" cy="2.9" r="1.15" fill="#fff"/></svg></span><div class="c " style="left:705px;width:214px;text-align:left;"><span class="x">Registration complete</span></div></div>
<div class="row" style="top:349px"><div class="ln" style="background:#f0f0f0"></div><div class="c " style="left:0px;width:95px;text-align:right;padding-right:4px"><span class="x">-</span></div><span class="ic" style="left:235px;top:6px"><svg width="10" height="13" viewBox="0 0 9.6 12.5" ><path d="M9.3 6 L5 0.4 L5 2.8 L0.6 2.8 L0.6 9 L5 9 L5 11.8 Z" fill="url(#gArr)" stroke="#3c98ec" stroke-width=".4" stroke-linejoin="round"/></svg></span><div class="c ran" style="left:246px;width:60px;text-align:center;"><span class="x">RRC</span><div class="ln" style="width:100%;background:#52ffa8"></div></div><div class="c " style="left:388px;width:60px;text-align:center;"><span class="x">122</span></div><div class="c " style="left:568px;width:35px;text-align:center;"><span class="x">1</span></div><div class="c " style="left:603px;width:82px;text-align:center;"><span class="x">DCCH-NR</span></div><span class="ic" style="left:690px;top:6px"><svg width="12" height="12" viewBox="0 0 12 12" ><circle cx="6" cy="6" r="5.8" fill="url(#gInfo)" stroke="#1a8cc6" stroke-width=".5"/><rect x="5" y="4.8" width="2" height="4.8" fill="#fff"/><circle cx="6" cy="2.9" r="1.15" fill="#fff"/></svg></span><div class="c " style="left:705px;width:214px;text-align:left;"><span class="x">Security mode complete</span></div></div>
<div class="row alt" style="top:374px"><div class="ln" style="background:#f0f0f0"></div><div class="c " style="left:0px;width:95px;text-align:right;padding-right:4px"><span class="x">-</span></div><span class="ic" style="left:235px;top:6px"><svg width="10" height="13" viewBox="0 0 9.6 12.5" ><path d="M0.3 6 L4.6 0.4 L4.6 2.8 L9 2.8 L9 9 L4.6 9 L4.6 11.8 Z" fill="url(#gArr)" stroke="#3c98ec" stroke-width=".4" stroke-linejoin="round"/></svg></span><div class="c ran" style="left:246px;width:60px;text-align:center;"><span class="x">RRC</span><div class="ln" style="width:100%;background:#52ffa8"></div></div><div class="c " style="left:388px;width:60px;text-align:center;"><span class="x">122</span></div><div class="c " style="left:568px;width:35px;text-align:center;"><span class="x">1</span></div><div class="c " style="left:603px;width:82px;text-align:center;"><span class="x">DCCH-NR</span></div><span class="ic" style="left:690px;top:6px"><svg width="12" height="12" viewBox="0 0 12 12" ><circle cx="6" cy="6" r="5.8" fill="url(#gInfo)" stroke="#1a8cc6" stroke-width=".5"/><rect x="5" y="4.8" width="2" height="4.8" fill="#fff"/><circle cx="6" cy="2.9" r="1.15" fill="#fff"/></svg></span><div class="c " style="left:705px;width:214px;text-align:left;"><span class="x">RRC reconfiguration</span></div></div>
<div class="row" style="top:399px"><div class="ln" style="background:#f0f0f0"></div><div class="c " style="left:0px;width:95px;text-align:right;padding-right:4px"><span class="x">13:08:43.461</span></div><div class="c " style="left:95px;width:80px;text-align:right;padding-right:4px"><span class="x">+0.001</span></div><span class="ic" style="left:306px;top:6px"><svg width="10" height="13" viewBox="0 0 9.6 12.5" ><path d="M9.3 6 L5 0.4 L5 2.8 L0.6 2.8 L0.6 9 L5 9 L5 11.8 Z" fill="url(#gArr)" stroke="#3c98ec" stroke-width=".4" stroke-linejoin="round"/></svg></span><div class="c nas" style="left:317px;width:60px;text-align:center;"><span class="x">NAS</span><div class="ln" style="width:100%;background:#a4ffd2"></div></div><div class="c " style="left:377px;width:71px;text-align:left;padding-left:14px"><span class="x">112 <span class="g">(100)</span></span></div><div class="c " style="left:448px;width:120px;text-align:left;padding-left:6px"><span class="x">001010123456789</span></div><div class="c " style="left:603px;width:82px;text-align:center;"><span class="x">5GMM</span></div><span class="ic" style="left:690px;top:6px"><svg width="12" height="12" viewBox="0 0 12 12" ><circle cx="6" cy="6" r="5.8" fill="url(#gInfo)" stroke="#1a8cc6" stroke-width=".5"/><rect x="5" y="4.8" width="2" height="4.8" fill="#fff"/><circle cx="6" cy="2.9" r="1.15" fill="#fff"/></svg></span><div class="c " style="left:705px;width:214px;text-align:left;"><span class="x">Registration complete</span></div></div>
<div class="row alt" style="top:424px"><div class="ln" style="background:#cdcdcd"></div><div class="c " style="left:0px;width:95px;text-align:right;padding-right:4px"><span class="x">13:08:43.490</span></div><div class="c " style="left:95px;width:80px;text-align:right;padding-right:4px"><span class="x">+0.029</span></div><span class="ic" style="left:235px;top:6px"><svg width="10" height="13" viewBox="0 0 9.6 12.5" ><path d="M9.3 6 L5 0.4 L5 2.8 L0.6 2.8 L0.6 9 L5 9 L5 11.8 Z" fill="url(#gArr)" stroke="#3c98ec" stroke-width=".4" stroke-linejoin="round"/></svg></span><div class="c ran" style="left:246px;width:60px;text-align:center;"><span class="x">RRC</span><div class="ln" style="width:100%;background:#a4e2c2"></div></div><div class="c " style="left:388px;width:60px;text-align:center;"><span class="x">122</span></div><div class="c " style="left:568px;width:35px;text-align:center;"><span class="x">1</span></div><div class="c " style="left:603px;width:82px;text-align:center;"><span class="x">DCCH-NR</span></div><span class="ic" style="left:690px;top:6px"><svg width="12" height="12" viewBox="0 0 12 12" ><circle cx="6" cy="6" r="5.8" fill="url(#gInfo)" stroke="#1a8cc6" stroke-width=".5"/><rect x="5" y="4.8" width="2" height="4.8" fill="#fff"/><circle cx="6" cy="2.9" r="1.15" fill="#fff"/></svg></span><div class="c " style="left:705px;width:214px;text-align:left;"><span class="x">RRC reconfiguration complete</span></div></div>
<div class="row" style="top:449px"><div class="ln" style="background:#cdcdcd"></div><div class="c " style="left:0px;width:95px;text-align:right;padding-right:4px"><span class="x">13:08:53.462</span></div><div class="c " style="left:95px;width:80px;text-align:right;padding-right:4px"><span class="x">+9.972</span></div><span class="ic" style="left:235px;top:6px"><svg width="10" height="13" viewBox="0 0 9.6 12.5" ><path d="M0.3 6 L4.6 0.4 L4.6 2.8 L9 2.8 L9 9 L4.6 9 L4.6 11.8 Z" fill="url(#gArr)" stroke="#3c98ec" stroke-width=".4" stroke-linejoin="round"/></svg></span><div class="c ran" style="left:246px;width:60px;text-align:center;"><span class="x">RRC</span><div class="ln" style="width:100%;background:#a4e2c2"></div></div><div class="c " style="left:388px;width:60px;text-align:center;"><span class="x">122</span></div><div class="c " style="left:568px;width:35px;text-align:center;"><span class="x">1</span></div><div class="c " style="left:603px;width:82px;text-align:center;"><span class="x">DCCH-NR</span></div><span class="ic" style="left:690px;top:6px"><svg width="12" height="12" viewBox="0 0 12 12" ><circle cx="6" cy="6" r="5.8" fill="url(#gInfo)" stroke="#1a8cc6" stroke-width=".5"/><rect x="5" y="4.8" width="2" height="4.8" fill="#fff"/><circle cx="6" cy="2.9" r="1.15" fill="#fff"/></svg></span><div class="c " style="left:705px;width:214px;text-align:left;"><span class="x">RRC release</span></div></div>
<div class="row alt" style="top:474px"><div class="ln" style="background:#f0f0f0"></div><div class="c " style="left:0px;width:95px;text-align:right;padding-right:4px"><span class="x">13:09:00.620</span></div><div class="c " style="left:95px;width:80px;text-align:right;padding-right:4px"><span class="x">+7.158</span></div><span class="ic" style="left:235px;top:6px"><svg width="10" height="13" viewBox="0 0 9.6 12.5" ><path d="M9.3 6 L5 0.4 L5 2.8 L0.6 2.8 L0.6 9 L5 9 L5 11.8 Z" fill="url(#gArr)" stroke="#3c98ec" stroke-width=".4" stroke-linejoin="round"/></svg></span><div class="c ran" style="left:246px;width:60px;text-align:center;"><span class="x">RRC</span><div class="ln" style="width:100%;background:#52ffa8"></div></div><div class="c " style="left:388px;width:60px;text-align:center;"><span class="x">123</span></div><div class="c " style="left:568px;width:35px;text-align:center;"><span class="x">1</span></div><div class="c " style="left:603px;width:82px;text-align:center;"><span class="x">CCCH-NR</span></div><span class="ic" style="left:690px;top:6px"><svg width="12" height="12" viewBox="0 0 12 12" ><circle cx="6" cy="6" r="5.8" fill="url(#gInfo)" stroke="#1a8cc6" stroke-width=".5"/><rect x="5" y="4.8" width="2" height="4.8" fill="#fff"/><circle cx="6" cy="2.9" r="1.15" fill="#fff"/></svg></span><div class="c " style="left:705px;width:214px;text-align:left;"><span class="x">RRC setup request</span></div></div>
<div class="row" style="top:499px"><div class="ln" style="background:#f0f0f0"></div><div class="c " style="left:0px;width:95px;text-align:right;padding-right:4px"><span class="x">-</span></div><span class="ic" style="left:235px;top:6px"><svg width="10" height="13" viewBox="0 0 9.6 12.5" ><path d="M0.3 6 L4.6 0.4 L4.6 2.8 L9 2.8 L9 9 L4.6 9 L4.6 11.8 Z" fill="url(#gArr)" stroke="#3c98ec" stroke-width=".4" stroke-linejoin="round"/></svg></span><div class="c ran" style="left:246px;width:60px;text-align:center;"><span class="x">RRC</span><div class="ln" style="width:100%;background:#52ffa8"></div></div><div class="c " style="left:388px;width:60px;text-align:center;"><span class="x">123</span></div><div class="c " style="left:568px;width:35px;text-align:center;"><span class="x">1</span></div><div class="c " style="left:603px;width:82px;text-align:center;"><span class="x">CCCH-NR</span></div><span class="ic" style="left:690px;top:6px"><svg width="12" height="12" viewBox="0 0 12 12" ><circle cx="6" cy="6" r="5.8" fill="url(#gInfo)" stroke="#1a8cc6" stroke-width=".5"/><rect x="5" y="4.8" width="2" height="4.8" fill="#fff"/><circle cx="6" cy="2.9" r="1.15" fill="#fff"/></svg></span><div class="c " style="left:705px;width:214px;text-align:left;"><span class="x">RRC setup</span></div></div>
<div class="row alt" style="top:524px"><div class="ln" style="background:#cdcdcd"></div><div class="c " style="left:0px;width:95px;text-align:right;padding-right:4px"><span class="x">13:09:00.650</span></div><div class="c " style="left:95px;width:80px;text-align:right;padding-right:4px"><span class="x">+0.030</span></div><span class="ic" style="left:235px;top:6px"><svg width="10" height="13" viewBox="0 0 9.6 12.5" ><path d="M9.3 6 L5 0.4 L5 2.8 L0.6 2.8 L0.6 9 L5 9 L5 11.8 Z" fill="url(#gArr)" stroke="#3c98ec" stroke-width=".4" stroke-linejoin="round"/></svg></span><div class="c ran" style="left:246px;width:60px;text-align:center;"><span class="x">RRC</span><div class="ln" style="width:100%;background:#a4e2c2"></div></div><div class="c " style="left:388px;width:60px;text-align:center;"><span class="x">123</span></div><div class="c " style="left:568px;width:35px;text-align:center;"><span class="x">1</span></div><div class="c " style="left:603px;width:82px;text-align:center;"><span class="x">DCCH-NR</span></div><span class="ic" style="left:690px;top:6px"><svg width="12" height="12" viewBox="0 0 12 12" ><circle cx="6" cy="6" r="5.8" fill="url(#gInfo)" stroke="#1a8cc6" stroke-width=".5"/><rect x="5" y="4.8" width="2" height="4.8" fill="#fff"/><circle cx="6" cy="2.9" r="1.15" fill="#fff"/></svg></span><div class="c " style="left:705px;width:214px;text-align:left;"><span class="x">RRC setup complete</span></div></div>
<div class="row" style="top:549px"><div class="ln" style="background:#f0f0f0"></div><div class="c " style="left:0px;width:95px;text-align:right;padding-right:4px"><span class="x">-</span></div><span class="ic" style="left:235px;top:6px"><svg width="10" height="13" viewBox="0 0 9.6 12.5" ><path d="M9.3 6 L5 0.4 L5 2.8 L0.6 2.8 L0.6 9 L5 9 L5 11.8 Z" fill="url(#gArr)" stroke="#3c98ec" stroke-width=".4" stroke-linejoin="round"/></svg></span><div class="c nas" style="left:246px;width:60px;text-align:center;"><span class="x">NAS</span><div class="ln" style="width:100%;background:#a4ffd2"></div></div><span class="ic" style="left:306px;top:6px"><svg width="10" height="13" viewBox="0 0 9.6 12.5" ><path d="M9.3 6 L5 0.4 L5 2.8 L0.6 2.8 L0.6 9 L5 9 L5 11.8 Z" fill="url(#gArr)" stroke="#3c98ec" stroke-width=".4" stroke-linejoin="round"/></svg></span><div class="c " style="left:388px;width:60px;text-align:center;"><span class="x">123</span></div><div class="c " style="left:603px;width:82px;text-align:center;"><span class="x">5GMM</span></div><span class="ic" style="left:690px;top:6px"><svg width="12" height="12" viewBox="0 0 12 12" ><circle cx="6" cy="6" r="5.8" fill="url(#gInfo)" stroke="#1a8cc6" stroke-width=".5"/><rect x="5" y="4.8" width="2" height="4.8" fill="#fff"/><circle cx="6" cy="2.9" r="1.15" fill="#fff"/></svg></span><div class="c " style="left:705px;width:214px;text-align:left;"><span class="x">Registration request</span></div></div>
<div class="row alt" style="top:574px"><div class="ln" style="background:#cdcdcd"></div><div class="c " style="left:0px;width:95px;text-align:right;padding-right:4px"><span class="x">13:09:00.651</span></div><div class="c " style="left:95px;width:80px;text-align:right;padding-right:4px"><span class="x">+0.001</span></div><span class="ic" style="left:306px;top:6px"><svg width="10" height="13" viewBox="0 0 9.6 12.5" ><path d="M9.3 6 L5 0.4 L5 2.8 L0.6 2.8 L0.6 9 L5 9 L5 11.8 Z" fill="url(#gArr)" stroke="#3c98ec" stroke-width=".4" stroke-linejoin="round"/></svg></span><div class="c nas" style="left:317px;width:60px;text-align:center;"><span class="x">NAS</span><div class="ln" style="width:100%;background:#b6e6ce"></div></div><div class="c " style="left:377px;width:71px;text-align:left;padding-left:14px"><span class="x">113 <span class="g">(101)</span></span></div><div class="c " style="left:448px;width:120px;text-align:left;padding-left:6px"><span class="x">001010123456790</span></div><div class="c " style="left:603px;width:82px;text-align:center;"><span class="x">5GMM</span></div><span class="ic" style="left:690px;top:6px"><svg width="12" height="12" viewBox="0 0 12 12" ><circle cx="6" cy="6" r="5.8" fill="url(#gInfo)" stroke="#1a8cc6" stroke-width=".5"/><rect x="5" y="4.8" width="2" height="4.8" fill="#fff"/><circle cx="6" cy="2.9" r="1.15" fill="#fff"/></svg></span><div class="c " style="left:705px;width:214px;text-align:left;"><span class="x">Registration request</span></div></div>
<div class="row" style="top:599px"><div class="ln" style="background:#cdcdcd"></div><div class="c " style="left:0px;width:95px;text-align:right;padding-right:4px"><span class="x">-</span></div><span class="ic" style="left:306px;top:6px"><svg width="10" height="13" viewBox="0 0 9.6 12.5" ><path d="M0.3 6 L4.6 0.4 L4.6 2.8 L9 2.8 L9 9 L4.6 9 L4.6 11.8 Z" fill="url(#gArr)" stroke="#3c98ec" stroke-width=".4" stroke-linejoin="round"/></svg></span><div class="c nas" style="left:317px;width:60px;text-align:center;"><span class="x">NAS</span><div class="ln" style="width:100%;background:#b6e6ce"></div></div><div class="c " style="left:377px;width:71px;text-align:left;padding-left:14px"><span class="x">113 <span class="g">(101)</span></span></div><div class="c " style="left:448px;width:120px;text-align:left;padding-left:6px"><span class="x">001010123456790</span></div><div class="c " style="left:603px;width:82px;text-align:center;"><span class="x">5GMM</span></div><span class="ic" style="left:690px;top:6px"><svg width="12" height="12" viewBox="0 0 12 12" ><circle cx="6" cy="6" r="5.8" fill="url(#gInfo)" stroke="#1a8cc6" stroke-width=".5"/><rect x="5" y="4.8" width="2" height="4.8" fill="#fff"/><circle cx="6" cy="2.9" r="1.15" fill="#fff"/></svg></span><div class="c " style="left:705px;width:214px;text-align:left;"><span class="x">Registration accept</span></div></div>
<div class="row alt" style="top:624px"><div class="ln" style="background:#cdcdcd"></div><div class="c " style="left:0px;width:95px;text-align:right;padding-right:4px"><span class="x">13:09:00.652</span></div><div class="c " style="left:95px;width:80px;text-align:right;padding-right:4px"><span class="x">+0.001</span></div><span class="ic" style="left:235px;top:6px"><svg width="10" height="13" viewBox="0 0 9.6 12.5" ><path d="M0.3 6 L4.6 0.4 L4.6 2.8 L9 2.8 L9 9 L4.6 9 L4.6 11.8 Z" fill="url(#gArr)" stroke="#3c98ec" stroke-width=".4" stroke-linejoin="round"/></svg></span><div class="c nas" style="left:246px;width:60px;text-align:center;"><span class="x">NAS</span><div class="ln" style="width:100%;background:#b6e6ce"></div></div><span class="ic" style="left:306px;top:6px"><svg width="10" height="13" viewBox="0 0 9.6 12.5" ><path d="M0.3 6 L4.6 0.4 L4.6 2.8 L9 2.8 L9 9 L4.6 9 L4.6 11.8 Z" fill="url(#gArr)" stroke="#3c98ec" stroke-width=".4" stroke-linejoin="round"/></svg></span><div class="c " style="left:388px;width:60px;text-align:center;"><span class="x">123</span></div><div class="c " style="left:603px;width:82px;text-align:center;"><span class="x">5GMM</span></div><span class="ic" style="left:690px;top:6px"><svg width="12" height="12" viewBox="0 0 12 12" ><circle cx="6" cy="6" r="5.8" fill="url(#gInfo)" stroke="#1a8cc6" stroke-width=".5"/><rect x="5" y="4.8" width="2" height="4.8" fill="#fff"/><circle cx="6" cy="2.9" r="1.15" fill="#fff"/></svg></span><div class="c " style="left:705px;width:214px;text-align:left;"><span class="x">Registration accept</span></div></div>
<div class="row" style="top:649px"><div class="ln" style="background:#cdcdcd"></div><div class="c " style="left:0px;width:95px;text-align:right;padding-right:4px"><span class="x">-</span></div><span class="ic" style="left:235px;top:6px"><svg width="10" height="13" viewBox="0 0 9.6 12.5" ><path d="M0.3 6 L4.6 0.4 L4.6 2.8 L9 2.8 L9 9 L4.6 9 L4.6 11.8 Z" fill="url(#gArr)" stroke="#3c98ec" stroke-width=".4" stroke-linejoin="round"/></svg></span><div class="c ran" style="left:246px;width:60px;text-align:center;"><span class="x">RRC</span><div class="ln" style="width:100%;background:#a4e2c2"></div></div><div class="c " style="left:388px;width:60px;text-align:center;"><span class="x">123</span></div><div class="c " style="left:568px;width:35px;text-align:center;"><span class="x">1</span></div><div class="c " style="left:603px;width:82px;text-align:center;"><span class="x">DCCH-NR</span></div><span class="ic" style="left:690px;top:6px"><svg width="12" height="12" viewBox="0 0 12 12" ><circle cx="6" cy="6" r="5.8" fill="url(#gInfo)" stroke="#1a8cc6" stroke-width=".5"/><rect x="5" y="4.8" width="2" height="4.8" fill="#fff"/><circle cx="6" cy="2.9" r="1.15" fill="#fff"/></svg></span><div class="c " style="left:705px;width:214px;text-align:left;"><span class="x">DL information transfer</span></div></div>
<div class="row alt" style="top:674px"><div class="ln" style="background:#f0f0f0"></div><div class="c " style="left:0px;width:95px;text-align:right;padding-right:4px"><span class="x">-</span></div><div class="c ran" style="left:246px;width:60px;text-align:center;"><span class="x">RRC</span><div class="ln" style="width:100%;background:#52ffa8"></div></div><div class="c " style="left:388px;width:60px;text-align:center;"><span class="x">123</span></div><div class="c " style="left:568px;width:35px;text-align:center;"><span class="x">1</span></div><span class="ic" style="left:690px;top:6px"><svg width="12" height="12" viewBox="0 0 12 12" ><circle cx="6" cy="6" r="5.8" fill="url(#gInfo)" stroke="#1a8cc6" stroke-width=".5"/><rect x="5" y="4.8" width="2" height="4.8" fill="#fff"/><circle cx="6" cy="2.9" r="1.15" fill="#fff"/></svg></span><div class="c " style="left:705px;width:214px;text-align:left;"><span class="x">NR band combinations</span></div></div>
<div class="row" style="top:699px"><div class="ln" style="background:#cdcdcd"></div><div class="c " style="left:0px;width:95px;text-align:right;padding-right:4px"><span class="x">-</span></div><span class="ic" style="left:235px;top:6px"><svg width="10" height="13" viewBox="0 0 9.6 12.5" ><path d="M0.3 6 L4.6 0.4 L4.6 2.8 L9 2.8 L9 9 L4.6 9 L4.6 11.8 Z" fill="url(#gArr)" stroke="#3c98ec" stroke-width=".4" stroke-linejoin="round"/></svg></span><div class="c ran" style="left:246px;width:60px;text-align:center;"><span class="x">RRC</span><div class="ln" style="width:100%;background:#a4e2c2"></div></div><div class="c " style="left:388px;width:60px;text-align:center;"><span class="x">123</span></div><div class="c " style="left:568px;width:35px;text-align:center;"><span class="x">1</span></div><div class="c " style="left:603px;width:82px;text-align:center;"><span class="x">DCCH-NR</span></div><span class="ic" style="left:690px;top:6px"><svg width="12" height="12" viewBox="0 0 12 12" ><circle cx="6" cy="6" r="5.8" fill="url(#gInfo)" stroke="#1a8cc6" stroke-width=".5"/><rect x="5" y="4.8" width="2" height="4.8" fill="#fff"/><circle cx="6" cy="2.9" r="1.15" fill="#fff"/></svg></span><div class="c " style="left:705px;width:214px;text-align:left;"><span class="x">Security mode command</span></div></div>
<div class="row alt" style="top:724px"><div class="ln" style="background:#f0f0f0"></div><div class="c " style="left:0px;width:95px;text-align:right;padding-right:4px"><span class="x">13:09:00.695</span></div><div class="c " style="left:95px;width:80px;text-align:right;padding-right:4px"><span class="x">+0.043</span></div><span class="ic" style="left:235px;top:6px"><svg width="10" height="13" viewBox="0 0 9.6 12.5" ><path d="M9.3 6 L5 0.4 L5 2.8 L0.6 2.8 L0.6 9 L5 9 L5 11.8 Z" fill="url(#gArr)" stroke="#3c98ec" stroke-width=".4" stroke-linejoin="round"/></svg></span><div class="c ran" style="left:246px;width:60px;text-align:center;"><span class="x">RRC</span><div class="ln" style="width:100%;background:#52ffa8"></div></div><div class="c " style="left:388px;width:60px;text-align:center;"><span class="x">123</span></div><div class="c " style="left:568px;width:35px;text-align:center;"><span class="x">1</span></div><div class="c " style="left:603px;width:82px;text-align:center;"><span class="x">DCCH-NR</span></div><span class="ic" style="left:690px;top:6px"><svg width="12" height="12" viewBox="0 0 12 12" ><circle cx="6" cy="6" r="5.8" fill="url(#gInfo)" stroke="#1a8cc6" stroke-width=".5"/><rect x="5" y="4.8" width="2" height="4.8" fill="#fff"/><circle cx="6" cy="2.9" r="1.15" fill="#fff"/></svg></span><div class="c " style="left:705px;width:214px;text-align:left;"><span class="x">UL information transfer</span></div></div>
<div class="row" style="top:749px"><div class="ln" style="background:#cdcdcd"></div><div class="c " style="left:0px;width:95px;text-align:right;padding-right:4px"><span class="x">-</span></div><span class="ic" style="left:235px;top:6px"><svg width="10" height="13" viewBox="0 0 9.6 12.5" ><path d="M9.3 6 L5 0.4 L5 2.8 L0.6 2.8 L0.6 9 L5 9 L5 11.8 Z" fill="url(#gArr)" stroke="#3c98ec" stroke-width=".4" stroke-linejoin="round"/></svg></span><div class="c nas" style="left:246px;width:60px;text-align:center;"><span class="x">NAS</span><div class="ln" style="width:100%;background:#b6e6ce"></div></div><span class="ic" style="left:306px;top:6px"><svg width="10" height="13" viewBox="0 0 9.6 12.5" ><path d="M9.3 6 L5 0.4 L5 2.8 L0.6 2.8 L0.6 9 L5 9 L5 11.8 Z" fill="url(#gArr)" stroke="#3c98ec" stroke-width=".4" stroke-linejoin="round"/></svg></span><div class="c " style="left:388px;width:60px;text-align:center;"><span class="x">123</span></div><div class="c " style="left:603px;width:82px;text-align:center;"><span class="x">5GMM</span></div><span class="ic" style="left:690px;top:6px"><svg width="12" height="12" viewBox="0 0 12 12" ><circle cx="6" cy="6" r="5.8" fill="url(#gInfo)" stroke="#1a8cc6" stroke-width=".5"/><rect x="5" y="4.8" width="2" height="4.8" fill="#fff"/><circle cx="6" cy="2.9" r="1.15" fill="#fff"/></svg></span><div class="c " style="left:705px;width:214px;text-align:left;"><span class="x">Registration complete</span></div></div>
<div class="row alt" style="top:774px"><div class="ln" style="background:#f0f0f0"></div><div class="c " style="left:0px;width:95px;text-align:right;padding-right:4px"><span class="x">-</span></div><span class="ic" style="left:235px;top:6px"><svg width="10" height="13" viewBox="0 0 9.6 12.5" ><path d="M9.3 6 L5 0.4 L5 2.8 L0.6 2.8 L0.6 9 L5 9 L5 11.8 Z" fill="url(#gArr)" stroke="#3c98ec" stroke-width=".4" stroke-linejoin="round"/></svg></span><div class="c ran" style="left:246px;width:60px;text-align:center;"><span class="x">RRC</span><div class="ln" style="width:100%;background:#52ffa8"></div></div><div class="c " style="left:388px;width:60px;text-align:center;"><span class="x">123</span></div><div class="c " style="left:568px;width:35px;text-align:center;"><span class="x">1</span></div><div class="c " style="left:603px;width:82px;text-align:center;"><span class="x">DCCH-NR</span></div><span class="ic" style="left:690px;top:6px"><svg width="12" height="12" viewBox="0 0 12 12" ><circle cx="6" cy="6" r="5.8" fill="url(#gInfo)" stroke="#1a8cc6" stroke-width=".5"/><rect x="5" y="4.8" width="2" height="4.8" fill="#fff"/><circle cx="6" cy="2.9" r="1.15" fill="#fff"/></svg></span><div class="c " style="left:705px;width:214px;text-align:left;"><span class="x">Security mode complete</span></div></div>
<div class="row" style="top:799px"><div class="ln" style="background:#f0f0f0"></div><div class="c " style="left:0px;width:95px;text-align:right;padding-right:4px"><span class="x">-</span></div><span class="ic" style="left:235px;top:6px"><svg width="10" height="13" viewBox="0 0 9.6 12.5" ><path d="M0.3 6 L4.6 0.4 L4.6 2.8 L9 2.8 L9 9 L4.6 9 L4.6 11.8 Z" fill="url(#gArr)" stroke="#3c98ec" stroke-width=".4" stroke-linejoin="round"/></svg></span><div class="c ran" style="left:246px;width:60px;text-align:center;"><span class="x">RRC</span><div class="ln" style="width:100%;background:#52ffa8"></div></div><div class="c " style="left:388px;width:60px;text-align:center;"><span class="x">123</span></div><div class="c " style="left:568px;width:35px;text-align:center;"><span class="x">1</span></div><div class="c " style="left:603px;width:82px;text-align:center;"><span class="x">DCCH-NR</span></div><span class="ic" style="left:690px;top:6px"><svg width="12" height="12" viewBox="0 0 12 12" ><circle cx="6" cy="6" r="5.8" fill="url(#gInfo)" stroke="#1a8cc6" stroke-width=".5"/><rect x="5" y="4.8" width="2" height="4.8" fill="#fff"/><circle cx="6" cy="2.9" r="1.15" fill="#fff"/></svg></span><div class="c " style="left:705px;width:214px;text-align:left;"><span class="x">RRC reconfiguration</span></div></div>
<div class="row alt" style="top:824px"><div class="ln" style="background:#cdcdcd"></div><div class="c " style="left:0px;width:95px;text-align:right;padding-right:4px"><span class="x">13:09:00.696</span></div><div class="c " style="left:95px;width:80px;text-align:right;padding-right:4px"><span class="x">+0.001</span></div><span class="ic" style="left:306px;top:6px"><svg width="10" height="13" viewBox="0 0 9.6 12.5" ><path d="M9.3 6 L5 0.4 L5 2.8 L0.6 2.8 L0.6 9 L5 9 L5 11.8 Z" fill="url(#gArr)" stroke="#3c98ec" stroke-width=".4" stroke-linejoin="round"/></svg></span><div class="c nas" style="left:317px;width:60px;text-align:center;"><span class="x">NAS</span><div class="ln" style="width:100%;background:#b6e6ce"></div></div><div class="c " style="left:377px;width:71px;text-align:left;padding-left:14px"><span class="x">113 <span class="g">(101)</span></span></div><div class="c " style="left:448px;width:120px;text-align:left;padding-left:6px"><span class="x">001010123456790</span></div><div class="c " style="left:603px;width:82px;text-align:center;"><span class="x">5GMM</span></div><span class="ic" style="left:690px;top:6px"><svg width="12" height="12" viewBox="0 0 12 12" ><circle cx="6" cy="6" r="5.8" fill="url(#gInfo)" stroke="#1a8cc6" stroke-width=".5"/><rect x="5" y="4.8" width="2" height="4.8" fill="#fff"/><circle cx="6" cy="2.9" r="1.15" fill="#fff"/></svg></span><div class="c " style="left:705px;width:214px;text-align:left;"><span class="x">Registration complete</span></div></div>
<div class="row" style="top:849px"><div class="ln" style="background:#f0f0f0"></div><div class="c ran" style="left:246px;width:60px;text-align:center;"><span class="x"></span><div class="ln" style="width:100%;background:#52ffa8"></div></div></div>
</body></html>
